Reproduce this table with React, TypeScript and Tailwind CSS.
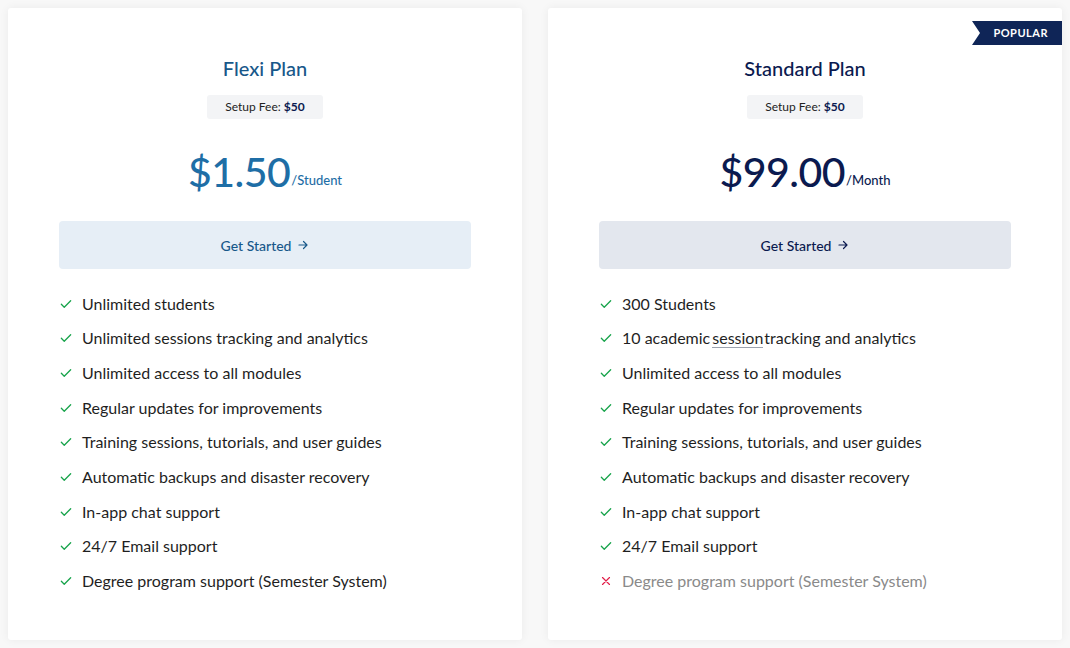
import React from "react";

const Check = () => (
  <svg width="14" height="14" viewBox="0 0 24 24" fill="none" stroke="#16a34a" strokeWidth="2.2" strokeLinecap="round" strokeLinejoin="round" className="shrink-0">
    <path d="M4 12.5l5 5L20 6.5" />
  </svg>
);
const Cross = () => (
  <svg width="14" height="14" viewBox="0 0 24 24" fill="none" stroke="#e11d48" strokeWidth="2" strokeLinecap="round" className="shrink-0">
    <path d="M6 6l12 12M18 6L6 18" />
  </svg>
);
const Arrow = () => (
  <svg width="12" height="12" viewBox="0 0 24 24" fill="none" stroke="currentColor" strokeWidth="2.4" strokeLinecap="round" strokeLinejoin="round">
    <path d="M4 12h16M13 5l7 7-7 7" />
  </svg>
);

type Feature = { text: React.ReactNode; ok: boolean };

function Card({
  title,
  price,
  unit,
  titleColor,
  priceColor,
  btnBg,
  btnColor,
  features,
  popular,
}: {
  title: string;
  price: string;
  unit: string;
  titleColor: string;
  priceColor: string;
  btnBg: string;
  btnColor: string;
  features: Feature[];
  popular?: boolean;
}) {
  return (
    <div className="relative flex-1 bg-white rounded-[3px] shadow-[0_0_10px_rgba(0,0,0,0.06)] px-[51px] pt-[47px] pb-[40px] flex flex-col items-center">
      {popular && (
        <div className="absolute right-0 top-[13px] h-[24px] w-[90px] bg-[#0f2557] flex items-center justify-end pr-[14px] [clip-path:polygon(0_0,100%_0,100%_100%,0_100%,8px_50%)]">
          <span className="text-white text-[11px] font-bold tracking-[0.5px]">POPULAR</span>
        </div>
      )}
      <div className={`text-[20px] font-medium leading-[26px] ${titleColor}`}>{title}</div>
      <div className="mt-[14px] h-[24px] px-[18px] bg-[#f3f4f6] rounded-[3px] flex items-center text-[12px] text-[#222]">
        Setup Fee:&nbsp;<span className="font-bold text-[#0b1a4f]">$50</span>
      </div>
      <div className={`mt-[31px] flex items-end ${priceColor}`}>
        <span className="text-[41px] font-medium leading-[44px] tracking-[-0.5px]">{price}</span>
        <span className="text-[13px] font-medium mb-[4px] ml-[1px]">{unit}</span>
      </div>
      <button className={`mt-[27px] w-full h-[48px] rounded-[4px] flex items-center justify-center gap-[6px] text-[14px] font-medium ${btnBg} ${btnColor}`}>
        Get Started <Arrow />
      </button>
      <ul className="mt-[24px] w-full flex flex-col gap-[13.7px]">
        {features.map((f, i) => (
          <li key={i} className="flex items-center gap-[9px] h-[21px]">
            {f.ok ? <Check /> : <Cross />}
            <span className={`text-[16px] ${f.ok ? "text-[#1f1f1f]" : "text-[#8a8a8a]"}`}>{f.text}</span>
          </li>
        ))}
      </ul>
    </div>
  );
}

export default function App() {
  const common = [
    "Unlimited access to all modules",
    "Regular updates for improvements",
    "Training sessions, tutorials, and user guides",
    "Automatic backups and disaster recovery",
    "In-app chat support",
    "24/7 Email support",
  ];
  const left: Feature[] = [
    { text: "Unlimited students", ok: true },
    { text: "Unlimited sessions tracking and analytics", ok: true },
    ...common.map((t) => ({ text: t, ok: true })),
    { text: "Degree program support (Semester System)", ok: true },
  ];
  const right: Feature[] = [
    { text: "300 Students", ok: true },
    {
      text: (
        <>
          10 academic
          <span className="inline-block ml-[2px] mr-[1px] border-b border-[#9ca3af] leading-[19px]">session</span>
          tracking and analytics
        </>
      ),
      ok: true,
    },
    ...common.map((t) => ({ text: t, ok: true })),
    { text: "Degree program support (Semester System)", ok: false },
  ];
  return (
    <div className="w-[1070px] h-[648px] bg-[#f8f8f8] flex gap-[26px] px-[8px] pt-[8px] pb-[8px] [font-family:Lato,'Noto_Sans',sans-serif]">
      <Card
        title="Flexi Plan"
        price="$1.50"
        unit="/Student"
        titleColor="text-[#18588a]"
        priceColor="text-[#1e6ea6]"
        btnBg="bg-[#e6eef6]"
        btnColor="text-[#18588a]"
        features={left}
      />
      <Card
        title="Standard Plan"
        price="$99.00"
        unit="/Month"
        titleColor="text-[#0b1a4f]"
        priceColor="text-[#0b1a4f]"
        btnBg="bg-[#e3e7ee]"
        btnColor="text-[#0b1a4f]"
        features={right}
        popular
      />
    </div>
  );
}
